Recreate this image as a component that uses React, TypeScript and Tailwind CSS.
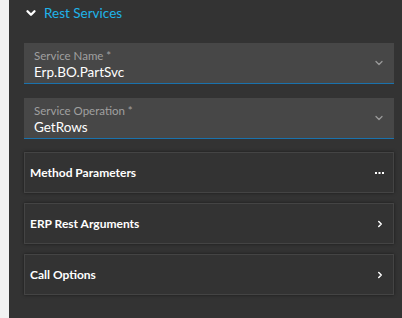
import { ChevronDown, ChevronRight } from 'lucide-react'

const FIELDS = [
  { label: 'Service Name *', value: 'Erp.BO.PartSvc' },
  { label: 'Service Operation *', value: 'GetRows' },
]

const CARDS = [
  { name: 'Method Parameters', icon: 'more' },
  { name: 'ERP Rest Arguments', icon: 'chevron' },
  { name: 'Call Options', icon: 'chevron' },
]

export default function App() {
  return (
    <div className="w-[402px] h-[318px] flex bg-[#f2f2f2] overflow-hidden" style={{ fontFamily: 'Lato, "Noto Sans", sans-serif' }}>
      <div className="w-[9px] shrink-0" />
      <div className="flex-1 bg-[#333333] pl-[15px] pr-[8px]">
        {/* section header */}
        <div className="h-[26px] flex items-center">
          <ChevronDown className="w-[14px] h-[14px] text-white" strokeWidth={4} />
          <span className="ml-[6px] text-[13.5px] text-[#1fb3ea]">Rest Services</span>
        </div>

        <div className="mt-[17px] flex flex-col gap-[14px]">
          {FIELDS.map((f) => (
            <div key={f.label} className="relative h-[41px] bg-[#474747] border-b border-[#1a72ad] pl-[10px] pt-[6px]">
              <div className="text-[11.5px] leading-[14px] text-[#a0a0a0]">{f.label}</div>
              <div className="text-[13.5px] leading-[18px] text-white">{f.value}</div>
              <ChevronDown className="absolute right-[9px] top-[14px] w-[12px] h-[12px] text-[#9a9a9a]" strokeWidth={2.5} />
            </div>
          ))}
        </div>

        <div className="mt-[13px] flex flex-col gap-[10px]">
          {CARDS.map((c) => (
            <div
              key={c.name}
              className="h-[41px] flex items-center justify-between bg-[#333333] border border-[#444444] shadow-[0_0_3px_rgba(0,0,0,0.5)] pl-[5px] pr-[8px]"
            >
              <span className="text-[12px] font-bold text-white">{c.name}</span>
              {c.icon === 'more' ? (
                <svg width="9" height="4" viewBox="0 0 9 4" className="mr-[1px]">
                  <rect x="0" y="1" width="2" height="2" fill="#fff" />
                  <rect x="3.5" y="1" width="2" height="2" fill="#fff" />
                  <rect x="7" y="1" width="2" height="2" fill="#fff" />
                </svg>
              ) : (
                <ChevronRight className="w-[10px] h-[10px] text-white" strokeWidth={3.5} />
              )}
            </div>
          ))}
        </div>
      </div>
    </div>
  )
}
